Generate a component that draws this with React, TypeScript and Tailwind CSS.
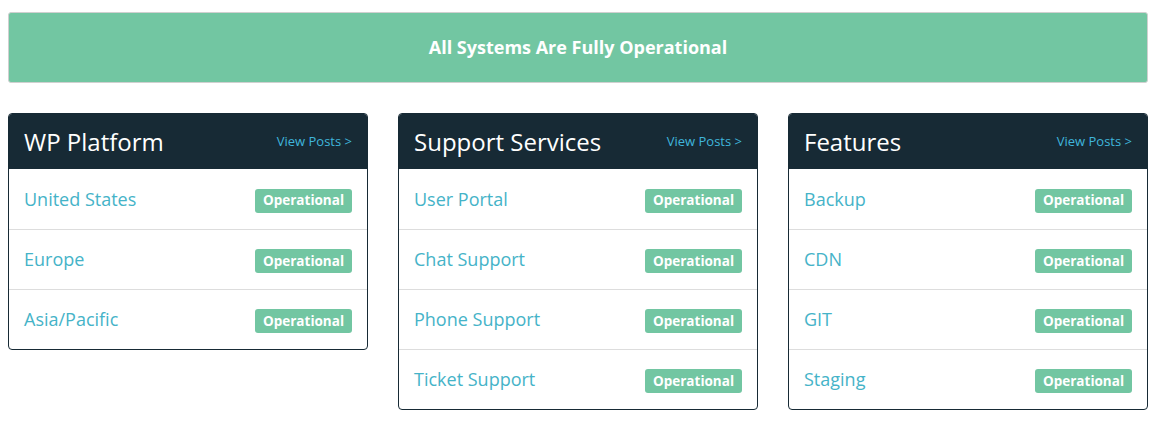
import React from 'react';

type Service = { name: string; status: string };
type Group = { title: string; services: Service[] };

const groups: Group[] = [
  {
    title: 'WP Platform',
    services: [
      { name: 'United States', status: 'Operational' },
      { name: 'Europe', status: 'Operational' },
      { name: 'Asia/Pacific', status: 'Operational' },
    ],
  },
  {
    title: 'Support Services',
    services: [
      { name: 'User Portal', status: 'Operational' },
      { name: 'Chat Support', status: 'Operational' },
      { name: 'Phone Support', status: 'Operational' },
      { name: 'Ticket Support', status: 'Operational' },
    ],
  },
  {
    title: 'Features',
    services: [
      { name: 'Backup', status: 'Operational' },
      { name: 'CDN', status: 'Operational' },
      { name: 'GIT', status: 'Operational' },
      { name: 'Staging', status: 'Operational' },
    ],
  },
];

const StatusCard: React.FC<{ group: Group }> = ({ group }) => (
  <div className="overflow-hidden rounded-[4px] border border-[#172a35] bg-white">
    <div className="flex h-[55px] items-center justify-between bg-[#172a35] px-[15px]">
      <h2 className="text-[24px] font-normal leading-none text-white">{group.title}</h2>
      <a href="#" className="text-[13px] text-[#3fb6dc]">
        View Posts &gt;
      </a>
    </div>
    {group.services.map((s, i) => (
      <div
        key={s.name}
        className={`flex h-[60px] items-center justify-between px-[15px] ${i > 0 ? 'border-t border-[#dddddd]' : ''}`}
      >
        <span className="text-[18px] text-[#45b3c8]">{s.name}</span>
        <span className="mt-[3px] flex h-[24px] w-[97px] items-center justify-center rounded-[3px] bg-[#72c6a2] text-[13.5px] font-bold text-white">
          {s.status}
        </span>
      </div>
    ))}
  </div>
);

export default function App() {
  return (
    <div className="w-[1156px] px-[8px] pt-[12px] font-['Open_Sans',sans-serif]">
      <div className="flex h-[71px] items-center justify-center rounded-[3px] border border-[#d0d0d0] bg-[#72c6a2]">
        <span className="text-[18px] font-bold text-white">All Systems Are Fully Operational</span>
      </div>
      <div className="mt-[30px] grid grid-cols-3 items-start gap-[30px]">
        {groups.map((g) => (
          <StatusCard key={g.title} group={g} />
        ))}
      </div>
    </div>
  );
}
